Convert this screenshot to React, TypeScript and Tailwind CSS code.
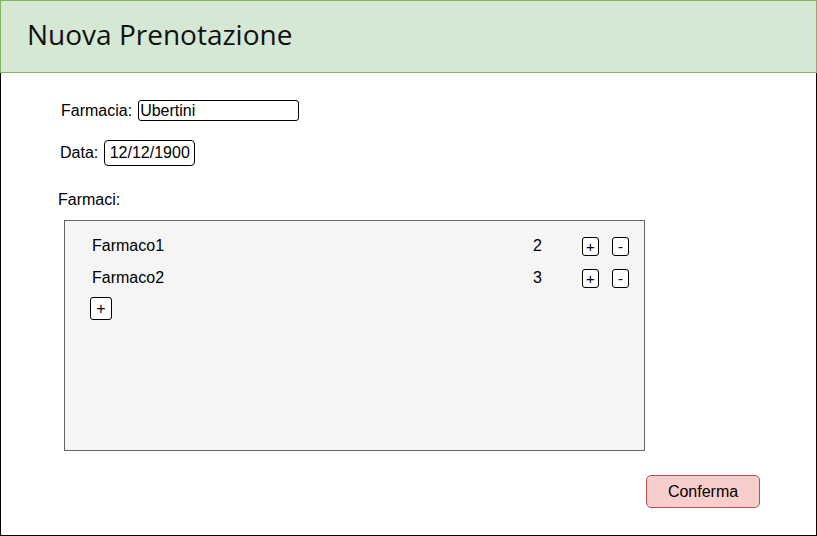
import React from "react";

const items = [
  { name: "Farmaco1", qty: 2 },
  { name: "Farmaco2", qty: 3 },
];

export default function App() {
  return (
    <div
      className="w-[817px] h-[536px] flex flex-col bg-white text-black border-l border-r border-b border-black"
      style={{ fontFamily: '"Liberation Sans", Arial, sans-serif' }}
    >
      <div className="h-[73px] -mx-px bg-[#d5e8d4] border border-[#82b366] flex items-center pl-[26px] shrink-0">
        <span
          className="text-[28px] leading-none text-[#111] pb-[5px]"
          style={{ fontFamily: '"Open Sans", "Noto Sans", sans-serif' }}
        >
          Nuova Prenotazione
        </span>
      </div>

      <div className="flex flex-col pl-[57px]">
        <div className="mt-[27px] flex items-center h-[21px] pl-[3px]">
          <span className="text-[16px] leading-none">Farmacia:</span>
          <div className="ml-[6px] w-[161px] h-[21px] border border-black rounded-[3px] flex items-center pl-[1px] text-[16px] leading-none">
            Ubertini
          </div>
        </div>

        <div className="mt-[19px] flex items-center h-[26px] pl-[2px]">
          <span className="text-[16px] leading-none">Data:</span>
          <div className="ml-[6px] w-[91px] h-[26px] border border-black rounded-[4px] flex items-center justify-center text-[16px] leading-none">
            12/12/1900
          </div>
        </div>

        <div className="mt-[25px] h-[18px] flex items-center text-[16px] leading-none">
          Farmaci:
        </div>

        <div className="mt-[11px] ml-[6px] w-[581px] h-[231px] bg-[#f5f5f5] border border-[#666666] pt-[9px]">
          {items.map((it) => (
            <div key={it.name} className="flex items-center h-[32px] pl-[27px]">
              <span className="w-[441px] text-[16px] leading-none">{it.name}</span>
              <span className="w-[49px] text-[16px] leading-none">{it.qty}</span>
              <div className="w-[17px] h-[19px] border border-black rounded-[3px] flex items-center justify-center text-[15px] leading-none bg-white">
                +
              </div>
              <div className="ml-[13px] w-[17px] h-[19px] border border-black rounded-[3px] flex items-center justify-center text-[15px] leading-none bg-white">
                -
              </div>
            </div>
          ))}
          <div className="mt-[3px] ml-[25px] w-[22px] h-[23px] border border-black rounded-[3px] flex items-center justify-center text-[16px] leading-none bg-white">
            +
          </div>
        </div>

        <div className="mt-[24px] ml-[588px] w-[114px] h-[33px] bg-[#f8cecc] border border-[#b85450] rounded-[5px] flex items-center justify-center text-[16px] leading-none">
          Conferma
        </div>
      </div>
    </div>
  );
}
